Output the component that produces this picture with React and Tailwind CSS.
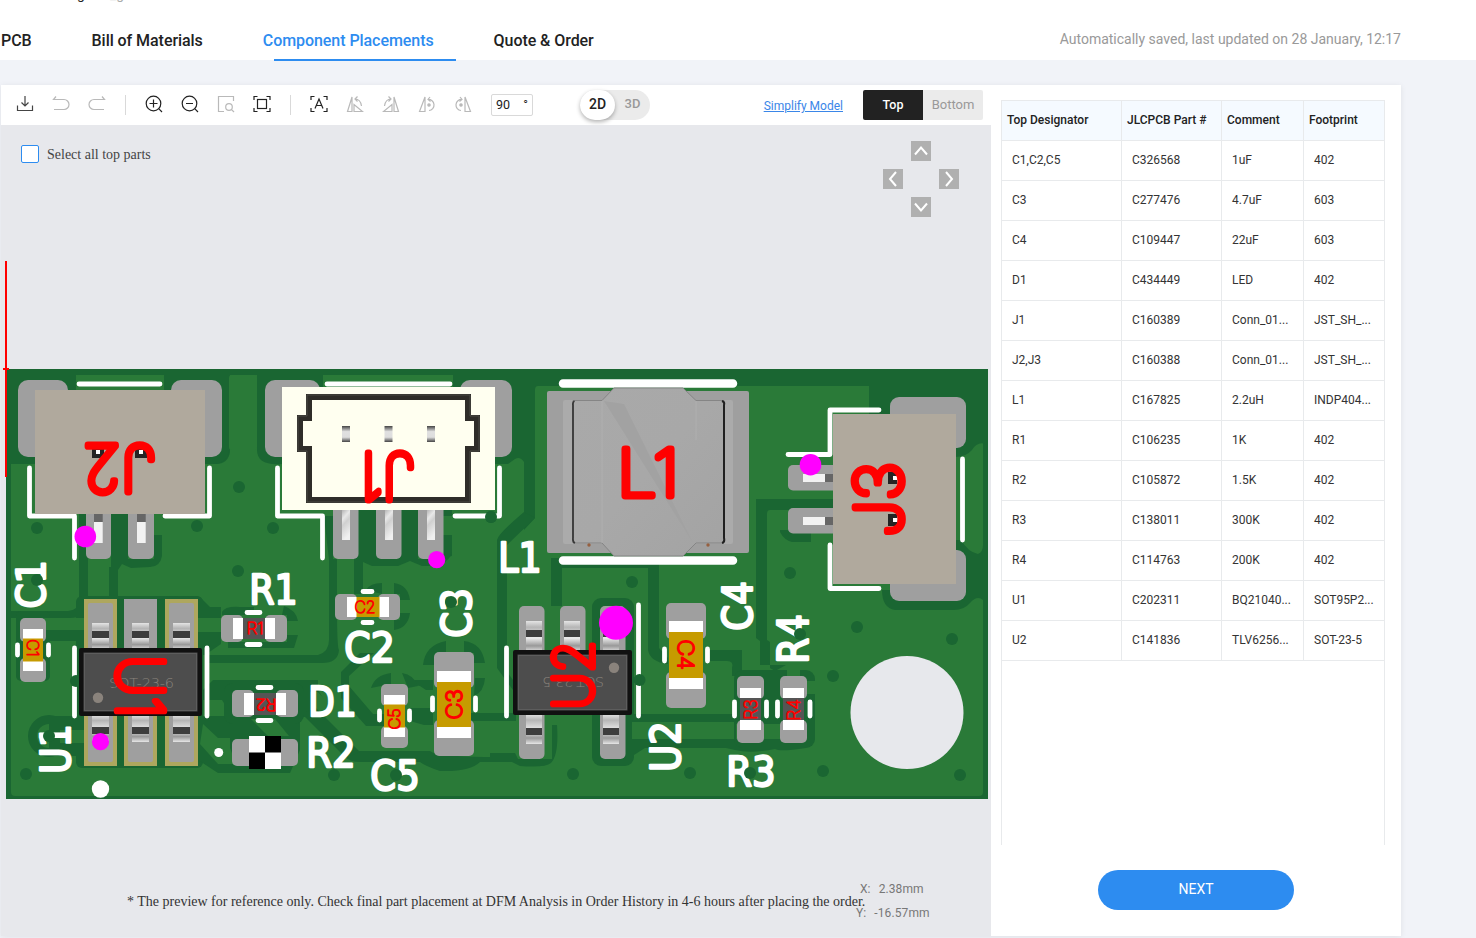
import React from "react";

const DARK = "#1a6632";
const LIGHT = "#2a7a38";
const PAD = "#9f9f9f";
const RED = "#ff0000";

const rows = [
  ["C1,C2,C5", "C326568", "1uF", "402"],
  ["C3", "C277476", "4.7uF", "603"],
  ["C4", "C109447", "22uF", "603"],
  ["D1", "C434449", "LED", "402"],
  ["J1", "C160389", "Conn_01...", "JST_SH_..."],
  ["J2,J3", "C160388", "Conn_01...", "JST_SH_..."],
  ["L1", "C167825", "2.2uH", "INDP404..."],
  ["R1", "C106235", "1K", "402"],
  ["R2", "C105872", "1.5K", "402"],
  ["R3", "C138011", "300K", "402"],
  ["R4", "C114763", "200K", "402"],
  ["U1", "C202311", "BQ21040...", "SOT95P2..."],
  ["U2", "C141836", "TLV6256...", "SOT-23-5"],
];

/* A stroked label that fills the box x1..x2, y1..y2 after rotation. */
function Label({ box, rot = 0, color = "#fff", sw = 2.4, font = "DejaVu Sans", weight = 400, bearing = 0.14, children }) {
  const [x1, y1, x2, y2] = box;
  const side = rot === 90 || rot === -90;
  const w = side ? y2 - y1 : x2 - x1;
  const h = side ? x2 - x1 : y2 - y1;
  const cap = h - sw;
  const size = cap / 0.729;
  return (
    <g transform={`translate(${(x1 + x2) / 2} ${(y1 + y2) / 2}) rotate(${rot})`}>
      <text
        x="0"
        y={cap / 2}
        textAnchor="middle"
        fontSize={size}
        fontWeight={weight}
        fontFamily={`"${font}", sans-serif`}
        fill={color}
        stroke={color}
        strokeWidth={sw}
        strokeLinejoin="round"
        strokeLinecap="round"
        textLength={w - sw + size * bearing}
        lengthAdjust="spacingAndGlyphs"
      >
        {children}
      </text>
    </g>
  );
}

function Red(props) {
  return <Label color={RED} font="Inter" weight={100} bearing={0.16} {...props} />;
}

function R({ x, y, x2, y2, f, r = 0, ...rest }) {
  return <rect x={x} y={y} width={x2 - x} height={y2 - y} fill={f} rx={r} {...rest} />;
}

function Substrate() {
  const vias = [
    [37, 528], [197, 526], [239, 487], [238, 571], [26, 774], [273, 528], [491, 517], [632, 582],
    [573, 774], [690, 773], [334, 775], [790, 573], [857, 627], [952, 639], [833, 676], [823, 771], [960, 775],
  ];
  return (
    <g>
      <R x={6} y={369} x2={988} y2={799} f={DARK} />
      <R x={11} y={375} x2={983} y2={796} f={LIGHT} r={4} />
      <path d="M6 369H76V390H222V375H163V369H230V452Q228 464 216 464H12Q6 464 6 458Z" fill={DARK} />
      <R x={76} y={375} x2={164} y2={392} f={LIGHT} r={3} />
      <path d="M164 369H323V390H282V464Q257 466 257 450V375H229V450Q228 464 212 464H164Z" fill={DARK} />
      <R x={229} y={375} x2={257} y2={450} f={LIGHT} r={3} />
      <path d="M453 369H988V386H538Q535 386 535 390V518L524 530V462Q520 456 515 459L508 464H453Z" fill={DARK} />
      <path d="M869 380H988V445Q978 440 972 450Q966 457 955 457H869Z" fill={DARK} />
      <path d="M956 540H961Q968 552 978 554Q983 552 983 545V600Q977 595 970 603Q964 610 954 610H895Q882 608 882 590H956Z" fill={DARK} />
      <R x={76} y={369} x2={164} y2={375} f={DARK} />

      {/* clearance round the J2 and J1 terminals */}
      <path d="M111 514H128V559H154V535H162V556Q160 567 150 567L131 568L122 564L118 570V606H109V567H111Z" fill={DARK} />
      <path d="M79 514H88V605Q84 618 70 618H11V611H68Q79 610 79 600Z" fill={DARK} />
      <path d="M324 516H333V559H337V606Q337 648 339 650Q338 663 322 663H205V655H318Q329 652 329 640V560Z" fill={DARK} />
      <path d="M358 500H376V550H401V500H418V559H434L452 556V535Q452 560 440 566L422 566L410 561L398 566H372L363 562V594H354V559Z" fill={DARK} />
      <R x={443} y={510} x2={452} y2={516} f={DARK} />
      <path d="M452 535V552Q450 560 443 562V535Z" fill={DARK} />

      {/* route from the inductor corridor */}
      <path d="M524 512L535 518L507 545V672L513 680V690L497 668V540Q498 534 524 512Z" fill={DARK} />
      <path d="M551 558H659V648L668 658V664Q650 662 648 650V568H562V606H551Z" fill={DARK} />
      <path d="M756 499H833V510H770Q767 510 767 514V640L770 642V668L775 671L786 665H760V641L756 638Z" fill={DARK} />
      <path d="M780 530H811V542H792Q784 540 780 532Z" fill={DARK} />
      <path d="M706 650H742V676H732V668Q734 661 727 661H706Z" fill={DARK} />
      <R x={632} y={714} x2={740} y2={722} f={DARK} />
      <path d="M634 739H806V748Q780 752 775 749Q750 754 735 750L726 748H645L634 755Z" fill={DARK} />

      {/* left package surroundings */}
      <R x={76} y={596} x2={203} y2={768} f={DARK} r={6} />
      <path d="M160 600Q164 594 200 597L210 607H221V618H200V632H221V644L205 655H200Z" fill={DARK} />
      <R x={198} y={618} x2={222} y2={632} f={LIGHT} />
      <path d="M203 690L213 680H318V690L355 751H430Q436 757 500 757V762H480Q470 772 440 771Q425 766 420 762H360Q350 762 345 757L305 717H300V750L290 773H218L195 758V716H232L222 700H203Z" fill={DARK} />
      <path d="M318 692L372 748H352L310 710V692Z" fill={LIGHT} />
      <path d="M300 718L345 758H310V768H300Z" fill={LIGHT} />
      <path d="M306 712L350 756L360 752L316 708Z" fill={DARK} />
      <path d="M203 724L218 738H230V748L236 764H218L200 744Z" fill={LIGHT} />
      <circle cx="49" cy="736" r="16.500" fill="none" stroke={DARK} strokeWidth="9" />
      <path d="M49 716H84V730H62V743H84V756H49Z" fill={DARK} />
      <R x={60} y={730} x2={84} y2={743} f={LIGHT} />
      <R x={44} y={630} x2={84} y2={641} f={DARK} />
      <R x={16} y={611} x2={50} y2={681} f={DARK} r={5} />
      <R x={44} y={618} x2={84} y2={630} f={LIGHT} />
      <R x={23} y={680} x2={42} y2={697} f={LIGHT} />

      {/* short routes between the centre passives */}
      <path d="M360 653L374 653L349 676V686L373 714H384V726H366L341 698V672Z" fill={DARK} />
      <path d="M413 680H433V690H426L420 686L409 684ZM410 708H433V725H424L410 721ZM470 713H516V721H470Z" fill={DARK} />
      <path d="M490 753H515L518 759H552V725H557Q559 755 551 763Q545 768 520 766L512 762H490Z" fill={DARK} />
      <path d="M423 665Q425 645 446 641V653H436V665ZM464 641Q482 643 485 663H474V653H464ZM475 678H485Q484 692 474 696Z" fill={DARK} />
      <path d="M371 688Q375 675 391 673V684ZM402 673Q414 675 418 686L408 688Z" fill={DARK} />
      <path d="M366 590Q370 583 382 583V594ZM394 583Q408 585 410 600H400V594H394ZM400 613H410Q408 628 394 630V620H400Z" fill={DARK} />
      <path d="M222 612Q225 606 240 607H254V615H222ZM284 606Q296 610 298 621H287V615H282ZM287 635H298L294 648H228V642H287Z" fill={DARK} />
      <R x={224} y={683} x2={304} y2={724} f={DARK} r={9} />
      <path d="M251 719H275L289 736H268Z" fill={LIGHT} />

      {/* right package surroundings */}
      <R x={592} y={598} x2={634} y2={766} f={DARK} r={9} />
      <R x={632} y={722} x2={735} y2={739} f={LIGHT} />
      <R x={734} y={670} x2={815} y2={748} f={DARK} r={9} />
      <R x={736} y={724} x2={806} y2={739} f={LIGHT} />
      <R x={787} y={666} x2={800} y2={678} f={LIGHT} />
      <R x={807} y={681} x2={818} y2={694} f={LIGHT} />
      {vias.map(([x, y]) => <circle key={`${x}-${y}`} cx={x} cy={y} r="6" fill={DARK} />)}
      <circle cx="907" cy="712.5" r="56.5" fill="#e7e8ec" />
    </g>
  );
}

function Silk() {
  return (
    <g>
      <g fill="none" stroke="#fff" strokeWidth="4.8" strokeLinejoin="round" strokeLinecap="round">
        <path d="M79 384H160M29.500 468V516H74.500V558M209.500 468V516H165" />
        <path d="M327 384H450M277.500 468V516H322.500V558M499.500 468V516H455" />
        <path d="M563 383.500H733M563 560.500H733" strokeWidth="8.500" />
        <path d="M879 410H830V454.500H788M830 545V588.500H879M962.500 459V540" />
        <path d="M74.500 648V716M207 648V716M506.500 648V716M638.500 605V716" />
        <path d="M17.500 645V655M48.500 645V655M247 612.500H260M247 644.500H260M258 687.500H271M258 720.500H271M363 591.500H372M363 622.500H372M379.500 711V720M409.500 711V720M432.500 698V710M475.500 698V710M664.500 649V661M707.500 649V661M734.500 702V716M766.500 702V716M777.500 702V716M810 702V716" />
      </g>
      <circle cx="100.500" cy="789" r="8.700" fill="#fff" />
      <circle cx="218.700" cy="752.500" r="4.500" fill="#fff" />
      <Label box={[15, 562, 46, 607]} rot={-90}>C1</Label>
      <Label box={[39, 726, 71, 772]} rot={-90}>U1</Label>
      <Label box={[251, 573, 296, 605]}>R1</Label>
      <Label box={[310, 685, 355, 717]}>D1</Label>
      <Label box={[308, 736, 354, 768]}>R2</Label>
      <Label box={[346, 631, 393, 663]}>C2</Label>
      <Label box={[372, 759, 418, 791]}>C5</Label>
      <Label box={[440, 590, 472, 636]} rot={-90}>C3</Label>
      <Label box={[500, 541, 540, 573]}>L1</Label>
      <Label box={[721, 583, 753, 629]} rot={-90}>C4</Label>
      <Label box={[649, 723, 681, 770]} rot={-90}>U2</Label>
      <Label box={[776, 616, 809, 662]} rot={-90}>R4</Label>
      <Label box={[728, 755, 774, 787]}>R3</Label>
      {[[37, 580], [49, 736], [451, 602], [396, 775], [800, 634], [750, 773], [491, 517], [76, 681], [639.5, 680]].map(([x, y]) => (
        <circle key={x} cx={x} cy={y} r="6" fill={DARK} />
      ))}
    </g>
  );
}

/* Two-terminal chip part; horizontal unless vertical is set. */
function Chip({ x, y, x2, y2, vertical, body, pad, inset, cap }) {
  const [bx, by, bx2, by2] = inset;
  return (
    <g>
      {vertical ? (
        <>
          <R x={x} y={y} x2={x2} y2={y + pad} f={PAD} r={5} />
          <R x={x} y={y2 - pad} x2={x2} y2={y2} f={PAD} r={5} />
          <R x={bx} y={by} x2={bx2} y2={by2} f={body} />
          <R x={bx} y={by} x2={bx2} y2={by + cap} f="#fff" />
          <R x={bx} y={by2 - cap} x2={bx2} y2={by2} f="#fff" />
        </>
      ) : (
        <>
          <R x={x} y={y} x2={x + pad} y2={y2} f={PAD} r={5} />
          <R x={x2 - pad} y={y} x2={x2} y2={y2} f={PAD} r={5} />
          <R x={bx} y={by} x2={bx2} y2={by2} f={body} />
          <R x={bx} y={by} x2={bx + cap} y2={by2} f="#fff" />
          <R x={bx2 - cap} y={by} x2={bx2} y2={by2} f="#fff" />
        </>
      )}
    </g>
  );
}

function Connectors() {
  return (
    <g>
      <R x={18} y={380} x2={68} y2={457} f={PAD} r={10} />
      <R x={171} y={380} x2={222} y2={457} f={PAD} r={10} />
      <R x={86} y={505} x2={111} y2={559} f={PAD} r={5} />
      <R x={128} y={505} x2={154} y2={559} f={PAD} r={5} />
      {[94, 137].map((x) => (
        <g key={x}>
          <R x={x} y={514} x2={x + 8.7} y2={522} f="#666" />
          <R x={x} y={522} x2={x + 8.7} y2={543} f="#f2f2f2" />
        </g>
      ))}
      <R x={35} y={390} x2={205} y2={514} f="#b0a99d" />
      {[92, 135].map((x) => (
        <g key={x}>
          <R x={x} y={449} x2={x + 12} y2={458} f="#242424" />
          <R x={x + 4} y={450} x2={x + 8} y2={454} f="#fff" />
        </g>
      ))}

      <R x={265} y={380} x2={320} y2={457} f={PAD} r={10} />
      <R x={460} y={380} x2={512} y2={457} f={PAD} r={10} />
      {[333, 376, 418].map((x) => (
        <g key={x}>
          <R x={x} y={500} x2={x + 25.500} y2={559} f={PAD} r={5} />
          <R x={x + 9} y={510} x2={x + 17} y2={540} f="url(#pin)" />
        </g>
      ))}
      <R x={282} y={387} x2={495} y2={510} f="#fffff0" />
      <path d="M309 397H468V418H477V449H468V500H309V449H300V418H309Z" fill="none" stroke="#2f2d29" strokeWidth="6" />
      <path d="M307 395H470V416H479V451H470V502H307V451H298V416H307Z" fill="none" stroke="#4b4a45" strokeWidth="1" />
      {[342, 384.500, 427].map((x) => <R key={x} x={x} y={426} x2={x + 8} y2={442} f="url(#barrel)" />)}

      <R x={890} y={397} x2={966} y2={448} f={PAD} r={9} />
      <R x={890} y={550} x2={966} y2={601} f={PAD} r={9} />
      {[465, 508].map((y) => (
        <g key={y}>
          <R x={788} y={y} x2={840} y2={y + 25.500} f={PAD} r={5} />
          <R x={803} y={y + 9} x2={825} y2={y + 17} f="#f2f2f2" />
          <R x={825} y={y + 9} x2={833} y2={y + 17} f="#666" />
        </g>
      ))}
      <R x={833} y={414} x2={956} y2={584} f="#b0a99d" />
      {[472, 514].map((y) => (
        <g key={y}>
          <R x={888} y={y} x2={897} y2={y + 12} f="#242424" />
          <R x={893} y={y + 4} x2={897} y2={y + 8} f="#fff" />
        </g>
      ))}
    </g>
  );
}

function Inductor() {
  return (
    <g>
      <R x={547} y={391} x2={749} y2={553} f={PAD} r={2} />
      <R x={563} y={400} x2={733} y2={544} f="#ababab" r={2} />
      <path d="M573 400.500H602L614 388H683L696 400.500H724V543H696L683 556H614L602 543H573Z" fill="url(#coil)" stroke="#858585" strokeWidth="1" />
      <path d="M604 401L624 404L693 543Z" fill="url(#fold)" />
      <path d="M602 401V543M696 401V440" stroke="#afafaf" strokeWidth="1" />
      <path d="M574.500 401Q572.500 402 573 405V538Q572.500 542 575 543" fill="none" stroke="#383838" strokeWidth="1.800" />
      <path d="M722 401Q725 402 724 405V538Q725 542 722 543" fill="none" stroke="#202020" strokeWidth="2" />
      <circle cx="589" cy="545" r="1.700" fill="#966040" />
      <circle cx="708" cy="545" r="1.700" fill="#966040" />
    </g>
  );
}

function Leg({ x, y, y2, dark, w = 17 }) {
  return (
    <g>
      <R x={x} y={y} x2={x + w} y2={y2} f="url(#barrelLight)" />
      <R x={x} y={dark} x2={x + w} y2={dark + 7} f="#3d3d3d" />
    </g>
  );
}

function Packages() {
  return (
    <g>
      {[[84, 117], [124, 157], [165, 198]].map(([x, x2], i) => (
        <g key={x}>
          {i === 1 ? (
            <R x={x} y={599} x2={x2} y2={660} f={PAD} />
          ) : (
            <>
              <R x={x} y={599} x2={x2} y2={660} f="#aea75e" />
              <R x={x + 4} y={603} x2={x2 - 4} y2={660} f={PAD} r={2} />
            </>
          )}
          <R x={x} y={700} x2={x2} y2={766} f="#aea75e" />
          <R x={x + 4} y={700} x2={x2 - 4} y2={762} f={PAD} r={2} />
          <Leg x={x + 8} y={623} y2={650} dark={631} />
          <Leg x={x + 8} y={715} y2={742} dark={727} />
        </g>
      ))}
      <R x={79} y={648} x2={202} y2={716} f="#111" r={2} />
      <R x={83.500} y={652.500} x2={197.500} y2={711.500} f="#4d4d4d" />
      <R x={84.500} y={653.500} x2={196.500} y2={710.500} f="none" stroke="#5d5d5d" />
      <text x="109" y="688" fontFamily='"DejaVu Sans", sans-serif' fontWeight="200" fontSize="14.500" fill="#8a837c" textLength="65">SOT-23-6</text>
      <circle cx="98" cy="697.700" r="5.200" fill="#8a837c" />

      {[519, 560, 600].map((x) => <R key={x} x={x} y={606} x2={x + 25.500} y2={665} f={PAD} r={5} />)}
      {[519, 600].map((x) => <R key={x} x={x} y={700} x2={x + 25.500} y2={759} f={PAD} r={5} />)}
      {[526, 564, 603].map((x) => <Leg key={x} x={x} y={621} y2={652} dark={630} w={16} />)}
      {[526, 603].map((x) => <Leg key={x} x={x} y={714} y2={744} dark={728} w={16} />)}
      <R x={513} y={650} x2={632} y2={715} f="#111" r={2} />
      <R x={517.500} y={654.500} x2={627.500} y2={710.500} f="#4d4d4d" />
      <R x={518.500} y={655.500} x2={626.500} y2={709.500} f="none" stroke="#5d5d5d" />
      <g transform="translate(573 682) rotate(180)">
        <text x="-31" y="5" fontFamily='"DejaVu Sans", sans-serif' fontWeight="200" fontSize="14" fill="#8a837c" textLength="62">SOT-23-5</text>
      </g>
      <circle cx="614" cy="667.700" r="5.200" fill="#8a837c" />
    </g>
  );
}

function Chips() {
  const gold = "#c69b00";
  const grey = "#555";
  return (
    <g>
      <Chip vertical x={20} y={618} x2={46} y2={682} pad={24} inset={[23, 629, 43, 671]} cap={9.500} body={gold} />
      <Chip x={221} y={615} x2={287} y2={642} pad={22} inset={[233, 618, 275, 639]} cap={10} body={grey} />
      <Chip x={232} y={690} x2={298} y2={717} pad={22} inset={[244, 693, 286, 715]} cap={10} body={grey} />
      <Chip x={335} y={594} x2={400} y2={620} pad={22} inset={[347, 597, 389, 617]} cap={9.500} body={gold} />
      <Chip vertical x={381} y={684} x2={408} y2={748} pad={22} inset={[384, 695, 405, 737]} cap={9.500} body={gold} />
      <Chip vertical x={434} y={652} x2={474} y2={756} pad={36} inset={[437, 671, 471, 738]} cap={11} body={gold} />
      <Chip vertical x={666} y={603} x2={706} y2={708} pad={36} inset={[669, 621, 703, 689]} cap={11} body={gold} />
      <Chip vertical x={737} y={676} x2={764} y2={743} pad={23} inset={[740, 688, 761, 730]} cap={10} body={grey} />
      <Chip vertical x={780} y={676} x2={807} y2={743} pad={23} inset={[783, 688, 804, 730]} cap={10} body={grey} />
      <R x={232} y={739} x2={255} y2={766} f={PAD} r={5} />
      <R x={276} y={739} x2={298} y2={766} f={PAD} r={5} />
      <R x={249} y={736} x2={281} y2={769} f="#fff" />
      <path d="M265 736H281V752.500H249V769H265Z" fill="#000" />
    </g>
  );
}

function Board() {
  return (
    <svg viewBox="1 125 990 811" className="block h-full w-full">
      <defs>
        <linearGradient id="pin" x1="0" y1="0" x2="0.300" y2="1">
          <stop offset="0" stopColor="#b5b5b5" /><stop offset="0.300" stopColor="#e8e8e8" /><stop offset="0.500" stopColor="#d0d0d0" /><stop offset="1" stopColor="#f0f0f0" />
        </linearGradient>
        <linearGradient id="barrel" x1="0" y1="0" x2="0" y2="1">
          <stop offset="0" stopColor="#444" /><stop offset="0.350" stopColor="#e0e0e0" /><stop offset="0.700" stopColor="#ddd" /><stop offset="1" stopColor="#444" />
        </linearGradient>
        <linearGradient id="barrelLight" x1="0" y1="0" x2="0" y2="1">
          <stop offset="0" stopColor="#e4e4e4" /><stop offset="0.200" stopColor="#b5b5b5" /><stop offset="0.550" stopColor="#ececec" /><stop offset="0.800" stopColor="#999" /><stop offset="1" stopColor="#e6e6e6" />
        </linearGradient>
        <linearGradient id="coil" x1="0" y1="0" x2="1" y2="1">
          <stop offset="0" stopColor="#a9a9a9" /><stop offset="0.500" stopColor="#a8a8a8" /><stop offset="1" stopColor="#a3a3a3" />
        </linearGradient>
        <linearGradient id="fold" x1="0" y1="1" x2="0.300" y2="0.800">
          <stop offset="0" stopColor="#aeaeae" /><stop offset="1" stopColor="#a2a2a2" />
        </linearGradient>
      </defs>
      <Substrate />
      <Silk />
      <Connectors />
      <Inductor />
      <Packages />
      <Chips />
      <Red box={[84, 442, 155, 496]} rot={180} sw={6.8}>J2</Red>
      <Red box={[363, 450, 414, 504]} rot={180} sw={6.8}>J1</Red>
      <Red box={[619, 445, 677, 499]} sw={6.8}>L1</Red>
      <Red box={[851, 464, 905, 535]} rot={-90} sw={6.8}>J3</Red>
      <Red box={[114, 657, 167, 716]} rot={90} sw={6.5}>U1</Red>
      <Red box={[550, 642, 596, 708]} rot={-90} sw={6}>U2</Red>
      <Red box={[26, 640, 39, 656]} rot={90} sw={1.3}>C1</Red>
      <Red box={[355, 600, 375, 614]} sw={1.5}>C2</Red>
      <Red box={[247, 622, 263, 635]} sw={1.3}>R1</Red>
      <Red box={[256, 698, 276, 711]} rot={180} sw={1.5}>R2</Red>
      <Red box={[388, 709, 401, 729]} rot={-90} sw={1.5}>C5</Red>
      <Red box={[445, 690, 463, 719]} rot={-90} sw={2.2}>C3</Red>
      <Red box={[677, 640, 695, 669]} rot={90} sw={2.2}>C4</Red>
      <Red box={[744, 700, 758, 719]} rot={-90} sw={1.3}>R3</Red>
      <Red box={[787, 700, 801, 720]} rot={-90} sw={1.3}>R4</Red>
      <circle cx="85.300" cy="536.500" r="10.800" fill="#f0f" />
      <circle cx="436.700" cy="559.700" r="8.600" fill="#f0f" />
      <circle cx="100.500" cy="741.700" r="8.600" fill="#f0f" />
      <circle cx="616" cy="622.700" r="17" fill="#f0f" />
      <circle cx="810.500" cy="464.700" r="10.800" fill="#f0f" />
      <path d="M6 261V477M3 369H9" stroke="#f00" strokeWidth="2" />
    </svg>
  );
}

function Icon({ color = "#b9b9b9", children }) {
  return (
    <div className="flex h-10 w-9 items-center justify-center pb-0.5">
      <svg width="18" height="18" viewBox="0 0 18 18" fill="none" stroke={color} strokeWidth="1.200">{children}</svg>
    </div>
  );
}

function Toolbar() {
  const corners = <path d="M1 5V1.500H4.500M13.500 1.500H17V5M17 13V16.500H13.500M4.500 16.500H1V13" />;
  return (
    <div className="flex h-10 w-[990px] items-center bg-white pl-1.5 pr-2">
      <Icon color="#444"><path d="M9 1V11M5.500 7.500L9 11L12.500 7.500M1.500 10.500V15.500H16.500V10.500" /></Icon>
      <Icon><path d="M4 1.500L1.500 4.500H12A5 5 0 0 1 12 14.500H2" /></Icon>
      <Icon><path d="M14 1.500L16.500 4.500H6A5 5 0 0 0 6 14.500H16" /></Icon>
      <div className="mx-2.5 h-5 w-px bg-[#d9d9d9]" />
      <Icon color="#222"><circle cx="8.500" cy="8.500" r="7.300" /><path d="M13.700 13.700L17 17M4.500 8.500H12.500M8.500 4.500V12.500" /></Icon>
      <Icon color="#222"><circle cx="8.500" cy="8.500" r="7.300" /><path d="M13.700 13.700L17 17M5 8.500H12" /></Icon>
      <Icon><path d="M7 16.500H1.500V1.500H16.500V6" /><circle cx="12" cy="12" r="3.300" /><path d="M14.300 14.300L17 17" /></Icon>
      <Icon color="#222">{corners}<rect x="4.500" y="4.500" width="9" height="9" /></Icon>
      <div className="mx-2.5 h-5 w-px bg-[#d9d9d9]" />
      <Icon color="#222">{corners}<path d="M5 13.500L9 4L13 13.500M6.500 10.500H11.500" /></Icon>
      <Icon><path d="M1.500 16.500L6 2V16.500ZM8 16.500V9.500L16.500 16.500ZM9 4Q14.500 4 15.500 11M11.500 1.500L9 4L11.500 6.500" /></Icon>
      <Icon><path d="M16.500 16.500L12 2V16.500ZM10 16.500V9.500L1.500 16.500ZM9 4Q3.500 4 2.500 11M6.500 1.500L9 4L6.500 6.500" /></Icon>
      <Icon><path d="M1.500 16.500L7 2V16.500ZM10 4.500A5.500 5.500 0 0 1 11 15.500M12 2L10 4.500L12.500 6.500" /><circle cx="11" cy="10" r="1.200" fill="#b9b9b9" /></Icon>
      <Icon><path d="M16.500 16.500L11 2V16.500ZM8 4.500A5.500 5.500 0 0 0 7 15.500M6 2L8 4.500L5.500 6.500" /><circle cx="7" cy="10" r="1.200" fill="#b9b9b9" /></Icon>
      <div className="ml-2.5 flex h-[22px] w-[42px] items-center justify-between rounded-[2px] border border-[#d9d9d9] px-1 text-[12.5px] text-[#222]">
        <span>90</span><span>°</span>
      </div>
      <div className="ml-[47px] flex h-[30px] w-[70px] items-center rounded-full bg-[#ebebeb] text-sm font-medium text-[#999]">
        <div className="flex h-[30px] w-[35px] items-center justify-center rounded-full bg-white pb-0.5 text-[#222] shadow-[0_2px_4px_rgba(0,0,0,.3)]">2D</div>
        <div className="flex-1 pb-0.5 text-center text-[13px]">3D</div>
      </div>
      <span className="ml-auto pt-0.5 text-xs text-[#3a86e8] underline underline-offset-1">Simplify Model</span>
      <div className="ml-5 flex h-[30px] w-[120px] overflow-hidden rounded-[2px] text-[13px]">
        <div className="flex flex-1 items-center justify-center bg-[#222] text-[12.5px] font-medium text-white">Top</div>
        <div className="flex flex-1 items-center justify-center bg-[#ebebeb] text-[#999]">Bottom</div>
      </div>
    </div>
  );
}

function Arrow({ d, className }) {
  return (
    <div className={`h-5 w-5 bg-[#b0b0b0] ${className}`}>
      <svg width="20" height="20" viewBox="0 0 20 20" fill="none" stroke="#fff" strokeWidth="2"><path d={d} /></svg>
    </div>
  );
}

export default function App() {
  return (
    <div className="flex h-[938px] w-[1476px] flex-col overflow-hidden bg-[#f1f3f8] font-['Roboto',sans-serif]">
      <header className="relative flex h-[60px] shrink-0 items-center justify-between bg-white pl-px pr-[75px]">
        <div className="absolute left-[77px] top-[-16px] flex gap-[25px] text-sm leading-5 text-[#222]">
          <span>g</span><span className="text-[#aaa]">_g</span>
        </div>
        <nav className="flex gap-[60px] pt-[21px] text-base font-medium leading-[38px] tracking-[-0.06px] text-[#222]">
          <span>PCB</span>
          <span>Bill of Materials</span>
          <span className="relative text-[#2d8cf0]">
            Component Placements
            <i className="absolute bottom-[-1px] left-[11px] h-0.5 w-[182px] bg-[#2d8cf0]" />
          </span>
          <span>Quote &amp; Order</span>
        </nav>
        <span className="pt-[18px] text-sm text-[#999]">Automatically saved, last updated on 28 January, 12:17</span>
      </header>
      <main className="ml-px mt-[25px] flex h-[851px] w-[1400px] shrink-0 bg-white shadow-[0_1px_6px_rgba(0,0,0,.08)]">
        <section className="flex w-[990px] shrink-0 flex-col">
          <Toolbar />
          <div className="relative min-h-0 flex-1 bg-[#e7e8ec]">
            <Board />
            <label className="absolute left-5 top-5 flex items-start gap-2 font-['Liberation_Serif',serif] text-sm leading-[18px] text-[#444]">
              <span className="h-[18px] w-[18px] rounded-[2px] border border-[#2d8cf0] bg-white" />
              <span className="pt-px">Select all top parts</span>
            </label>
            <div className="absolute left-[882px] top-4 grid grid-cols-3 gap-2">
              <Arrow className="col-start-2" d="M4 13.500L10 6.500L16 13.500" />
              <Arrow className="col-start-1 row-start-2" d="M13 3L7 10L13 17" />
              <Arrow className="col-start-3 row-start-2" d="M7 3L13 10L7 17" />
              <Arrow className="col-start-2 row-start-3" d="M4 6.500L10 13.500L16 6.500" />
            </div>
            <p className="absolute left-[126px] top-[767px] whitespace-nowrap font-['Liberation_Serif',serif] text-sm leading-5 text-[#333]">
              * The preview for reference only. Check final part placement at DFM Analysis in Order History in 4-6 hours after placing the order.
            </p>
            <div className="absolute left-[855px] top-[752px] text-xs leading-6 tracking-[0.1px] text-[#777]">
              <div className="flex gap-2 pl-1"><span>X:</span><span>2.38mm</span></div>
              <div className="flex gap-2"><span>Y:</span><span>-16.57mm</span></div>
            </div>
          </div>
        </section>
        <aside className="flex flex-1 flex-col items-center pt-[15px]">
          <div className="mr-[6px] h-[745px] w-[384px] border-x border-t border-[#e8eaec] text-xs text-[#333]">
            <div className="grid h-10 grid-cols-[120px_100px_82px_80px] border-b border-[#e8eaec] bg-[#f5faff] font-medium text-[#222]">
              {["Top Designator", "JLCPCB Part #", "Comment", "Footprint"].map((h) => (
                <div key={h} className="flex items-center whitespace-nowrap border-r border-[#e8eaec] pb-0.5 pl-[5px] last:border-r-0">{h}</div>
              ))}
            </div>
            {rows.map((r) => (
              <div key={r[0]} className="grid h-10 grid-cols-[120px_100px_82px_80px] border-b border-[#e8eaec]">
                {r.map((c, i) => (
                  <div key={i} className="flex items-center whitespace-nowrap border-r border-[#e8eaec] pb-0.5 pl-2.5 last:border-r-0">{c}</div>
                ))}
              </div>
            ))}
          </div>
          <button className="mt-[25px] h-10 w-[196px] rounded-full bg-[#2d8cf0] pb-0.5 text-sm text-white">NEXT</button>
        </aside>
      </main>
    </div>
  );
}
